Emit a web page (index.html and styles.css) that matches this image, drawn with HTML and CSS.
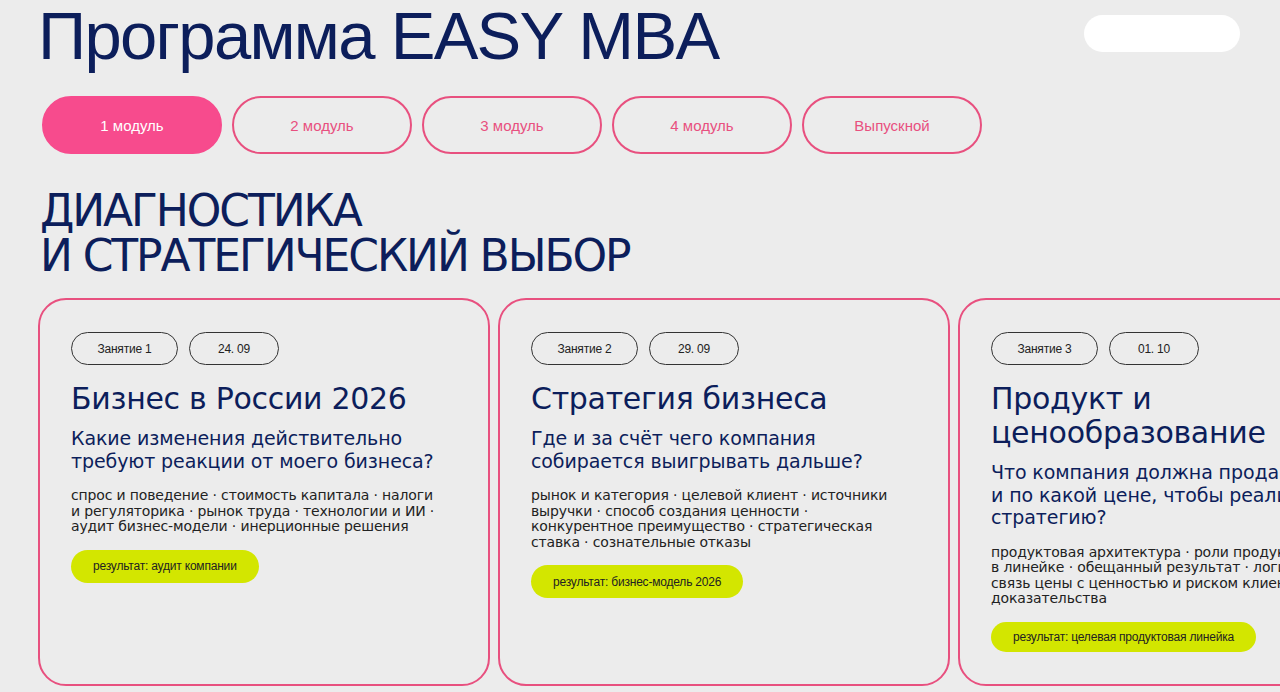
FILE: index.html
```html
<!DOCTYPE html>
<html lang="ru">
<head>
<meta charset="utf-8">
<title>Программа EASY MBA</title>
<link rel="stylesheet" href="styles.css">
</head>
<body>
<div class="page">
  <header class="top">
    <h1 class="title">Программа EASY MBA</h1>
    <div class="white-pill"></div>
  </header>
  <nav class="tabs">
    <button class="tab active">1 модуль</button>
    <button class="tab">2 модуль</button>
    <button class="tab">3 модуль</button>
    <button class="tab">4 модуль</button>
    <button class="tab">Выпускной</button>
  </nav>
  <h2 class="module-title"><span class="line">ДИАГНОСТИКА</span><span class="line">И СТРАТЕГИЧЕСКИЙ ВЫБОР</span></h2>
  <div class="cards">
    <article class="card">
      <div class="tags"><span class="tag tag-lesson">Занятие 1</span><span class="tag tag-date">24. 09</span></div>
      <h3 class="card-title">Бизнес в России 2026</h3>
      <p class="card-question">Какие изменения действительно требуют реакции от&nbsp;моего бизнеса?</p>
      <p class="card-topics">спрос и&nbsp;поведение · стоимость капитала · налоги и&nbsp;регуляторика · рынок труда · технологии и&nbsp;ИИ · аудит бизнес-модели · инерционные решения</p>
      <span class="result">результат: аудит компании</span>
    </article>
    <article class="card">
      <div class="tags"><span class="tag tag-lesson">Занятие 2</span><span class="tag tag-date">29. 09</span></div>
      <h3 class="card-title">Стратегия бизнеса</h3>
      <p class="card-question">Где и&nbsp;за&nbsp;счёт чего компания собирается выигрывать дальше?</p>
      <p class="card-topics">рынок и&nbsp;категория · целевой клиент · источники выручки · способ создания ценности · конкурентное преимущество · стратегическая ставка · сознательные отказы</p>
      <span class="result">результат: бизнес-модель 2026</span>
    </article>
    <article class="card">
      <div class="tags"><span class="tag tag-lesson">Занятие 3</span><span class="tag tag-date">01. 10</span></div>
      <h3 class="card-title">Продукт и ценообразование</h3>
      <p class="card-question">Что компания должна продавать и&nbsp;по&nbsp;какой цене, чтобы реализовать стратегию?</p>
      <p class="card-topics">продуктовая архитектура · роли продуктов в&nbsp;линейке · обещанный результат · логика цены · связь цены с&nbsp;ценностью и&nbsp;риском клиента · доказательства</p>
      <span class="result">результат: целевая продуктовая линейка</span>
    </article>
  </div>
</div>
</body>
</html>
```
FILE: styles.css
```css
* { box-sizing: border-box; }
html, body { margin: 0; padding: 0; }
body {
  background: #ececec;
  overflow: hidden;
  width: 1280px;
  height: 692px;
  font-family: "DejaVu Sans", sans-serif;
  color: #0c1e5b;
}
.page { padding: 0 0 0 38px; }
.top {
  display: flex;
  align-items: flex-start;
  justify-content: space-between;
  padding-right: 40px;
}
.title {
  margin: 0;
  font-family: "Liberation Sans", sans-serif;
  font-weight: 400;
  font-size: 67px;
  line-height: 72px;
  letter-spacing: -1.7px;
  color: #0c1e5b;
}
.white-pill {
  width: 156px;
  height: 37px;
  margin-top: 15px;
  background: #ffffff;
  border-radius: 19px;
}
.tabs {
  display: flex;
  gap: 10px;
  margin-top: 24px;
  padding-left: 4px;
}
.tab {
  width: 180px;
  height: 58px;
  border: 2px solid #e8507f;
  border-radius: 29px;
  background: transparent;
  color: #e8507f;
  font-family: "Liberation Sans", sans-serif;
  font-size: 15px;
  padding: 0;
}
.tab.active {
  background: #f74b8d;
  border-color: #f74b8d;
  color: #ffffff;
}
.module-title {
  margin: 34px 0 0 2px;
  font-family: "DejaVu Sans", sans-serif;
  font-weight: 400;
  font-size: 44px;
  line-height: 45px;
  letter-spacing: -2.1px;
  color: #0c1e5b;
}
.module-title .line { display: block; height: 45px; }
.cards {
  display: flex;
  gap: 8px;
  margin-top: 20px;
}
.card {
  flex: 0 0 452px;
  height: 388px;
  border: 2px solid #e8507f;
  border-radius: 28px;
  padding: 32px 31px;
  display: flex;
  flex-direction: column;
  align-items: flex-start;
}
.tags { display: flex; gap: 11px; }
.tag {
  display: inline-flex;
  align-items: center;
  justify-content: center;
  height: 33px;
  border: 1px solid #333;
  border-radius: 17px;
  font-family: "Liberation Sans", sans-serif;
  font-size: 12px;
  letter-spacing: -0.2px;
  color: #222;
}
.tag-lesson { width: 107px; }
.tag-date { width: 90px; }
.card-title {
  margin: 17px 0 0;
  font-weight: 400;
  font-size: 30px;
  line-height: 34px;
  letter-spacing: -0.3px;
  color: #0c1e5b;
}
.card-question {
  margin: 11px 0 0;
  font-size: 19px;
  line-height: 22.5px;
  letter-spacing: -0.1px;
  color: #0c1e5b;
  max-width: 380px;
}
.card-topics {
  margin: 16px 0 0;
  font-size: 14px;
  line-height: 15.5px;
  color: #222;
  letter-spacing: -0.15px;
  max-width: 370px;
}
.result {
  margin-top: 15px;
  display: inline-flex;
  align-items: center;
  height: 33px;
  padding: 0 22px;
  border-radius: 17px;
  background: #d3e600;
  font-family: "Liberation Sans", sans-serif;
  font-size: 12px;
  letter-spacing: -0.2px;
  color: #222;
}
```
